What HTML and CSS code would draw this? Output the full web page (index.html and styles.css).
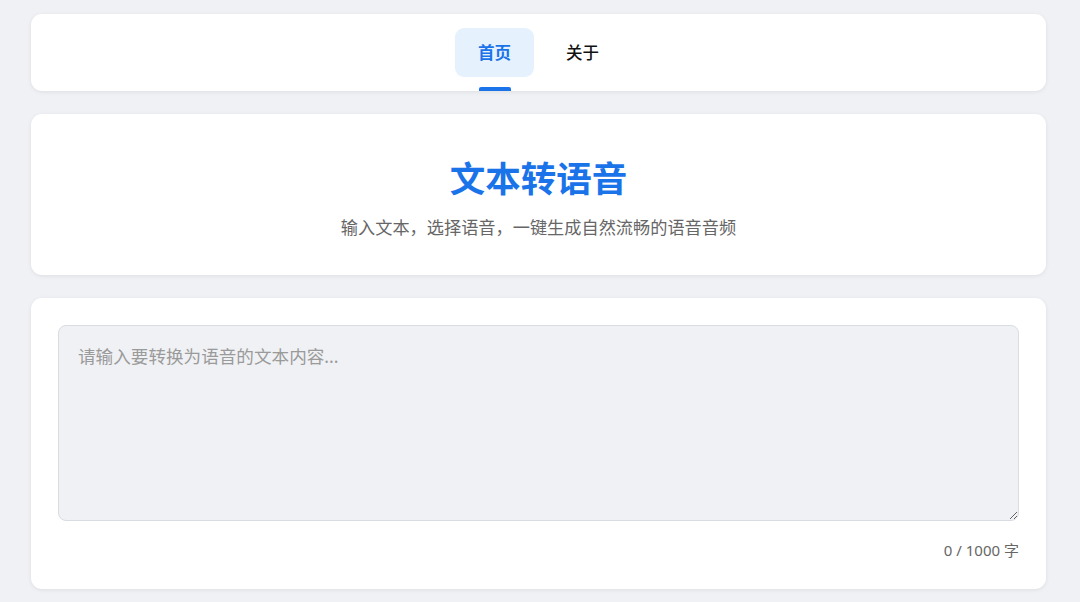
FILE: index.html
```html
<!DOCTYPE html>
<html lang="zh-CN">
<head>
<meta charset="utf-8">
<title>文本转语音</title>
<link rel="stylesheet" href="styles.css">
</head>
<body>
<div class="page">
  <nav class="card nav">
    <a class="tab active">首页<span class="bar"></span></a>
    <a class="tab">关于</a>
  </nav>
  <section class="card hero">
    <h1 class="title">文本转语音</h1>
    <p class="subtitle">输入文本，选择语音，一键生成自然流畅的语音音频</p>
  </section>
  <section class="card input-card">
    <textarea class="text-input" placeholder="请输入要转换为语音的文本内容..."></textarea>
    <div class="counter">0 / 1000 字</div>
  </section>
</div>
</body>
</html>
```

FILE: styles.css
```css
* { box-sizing: border-box; }
html, body { margin: 0; padding: 0; }
body {
  background: #f0f1f5;
  font-family: "Noto Sans", "Noto Sans CJK SC", sans-serif;
  color: #222;
  height: 602px;
  overflow: hidden;
}
.page {
  padding: 14px 34px 0 31px;
  display: flex;
  flex-direction: column;
  gap: 23px;
}
.card {
  background: #ffffff;
  border-radius: 11px;
  box-shadow: 0 1px 4px rgba(0, 0, 0, 0.08);
}
.nav {
  height: 77px;
  display: flex;
  justify-content: center;
  align-items: flex-start;
  gap: 9px;
  padding-top: 14px;
}
.tab {
  position: relative;
  display: block;
  height: 49px;
  padding: 0 23px;
  line-height: 49px;
  font-size: 16.5px;
  font-weight: 500;
  color: #111;
  border-radius: 9px;
  cursor: pointer;
}
.tab.active {
  background: #e6f1fe;
  color: #1a73e8;
  font-weight: 700;
}
.bar {
  position: absolute;
  left: 50%;
  transform: translateX(-50%);
  top: 59px;
  width: 32px;
  height: 4px;
  border-radius: 2px 2px 0 0;
  background: #1a73e8;
}
.hero {
  height: 161px;
  padding-top: 40px;
  text-align: center;
}
.title {
  margin: 0;
  font-size: 35.5px;
  line-height: 48px;
  font-weight: 700;
  color: #1a73e8;
}
.subtitle {
  margin: 13px 0 0;
  font-size: 17.2px;
  line-height: 26px;
  color: #666;
}
.input-card {
  height: 291px;
  padding: 27px 27px 0 27px;
  display: flex;
  flex-direction: column;
}
.text-input {
  display: block;
  width: 100%;
  height: 196px;
  padding: 17px 19px;
  background: #f0f1f4;
  border: 1px solid #d9dce3;
  border-radius: 8px;
  font-family: "Noto Sans", "Noto Sans CJK SC", sans-serif;
  font-size: 17.6px;
  line-height: 26px;
  color: #333;
  resize: vertical;
  outline: none;
}
.text-input::placeholder { color: #9a9a9a; }
.counter {
  margin-top: 18px;
  text-align: right;
  font-size: 15px;
  line-height: 22px;
  color: #666;
}
```
